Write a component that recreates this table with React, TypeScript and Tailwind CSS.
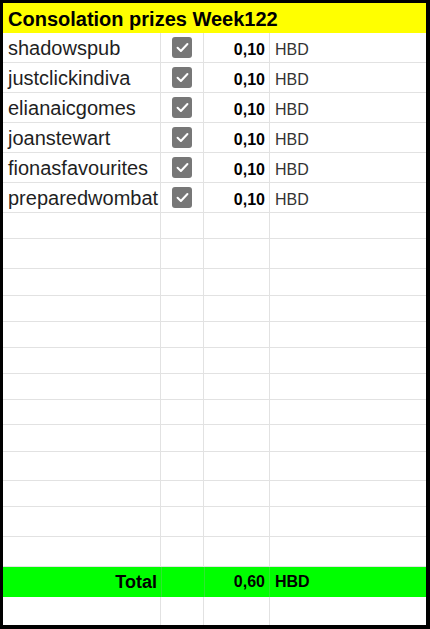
const winners = [
  "shadowspub",
  "justclickindiva",
  "elianaicgomes",
  "joanstewart",
  "fionasfavourites",
  "preparedwombat",
]

// empty sheet rows below the list, heights as seen in the sheet
const emptyRows = [26, 30, 27, 26, 26, 26, 26, 25, 27, 29, 26, 30, 30]

const cols = "grid grid-cols-[158px_43px_66px_1fr]"
const cell = "border-r border-b border-[#e2e2e2]"

function CheckBox() {
  return (
    <div className="w-[20px] h-[21px] rounded-[3px] bg-[#777777] flex items-center justify-center">
      <svg width="15" height="15" viewBox="0 0 14 14" fill="none">
        <path d="M2.4 7.3 L5.5 10.3 L11.6 3.7" stroke="white" strokeWidth="1.9" strokeLinecap="round" strokeLinejoin="round" />
      </svg>
    </div>
  )
}

export default function App() {
  return (
    <div
      className="w-[430px] h-[629px] bg-black pt-[3px] pl-[3px] pr-[4px] pb-[4px]"
      style={{ fontFamily: '"Liberation Sans", Arial, sans-serif' }}
    >
      <div className="h-full bg-white flex flex-col overflow-hidden">
        <div className="h-[30px] shrink-0 bg-[#ffff00] flex items-center pl-[5px] pt-[1px] text-[20px] font-bold text-black">
          Consolation prizes Week122
        </div>

        {winners.map((name) => (
          <div key={name} className={`${cols} h-[30px] shrink-0`}>
            <div className={`${cell} flex items-center pl-[5px] text-[20px] text-[#1f1f1f] whitespace-nowrap overflow-hidden`}>
              {name}
            </div>
            <div className={`${cell} flex items-center justify-center`}>
              <CheckBox />
            </div>
            <div className={`${cell} flex items-center justify-end pr-1 pt-[5px] text-[16px] font-bold text-black`}>
              0,10
            </div>
            <div className="border-b border-[#e2e2e2] flex items-center pl-[5px] pt-[5px] text-[16px] text-[#333333]">
              HBD
            </div>
          </div>
        ))}

        {emptyRows.map((h, i) => (
          <div key={i} className={`${cols} shrink-0`} style={{ height: h }}>
            <div className={cell} />
            <div className={cell} />
            <div className={cell} />
            <div className="border-b border-[#e2e2e2]" />
          </div>
        ))}

        <div className={`${cols} h-[30px] shrink-0 bg-[#00ff00]`}>
          <div className="flex items-center justify-end pr-1 text-[18px] font-bold text-black">Total</div>
          <div className="border-l border-[#2ee82e]" />
          <div className="border-l border-r border-[#2ee82e] flex items-center justify-end pr-1 text-[16px] font-bold text-black">
            0,60
          </div>
          <div className="flex items-center pl-[5px] text-[16px] font-bold text-black">HBD</div>
        </div>

        <div className={`${cols} flex-1`}>
          <div className="border-r border-[#e2e2e2]" />
          <div className="border-r border-[#e2e2e2]" />
          <div className="border-r border-[#e2e2e2]" />
          <div />
        </div>
      </div>
    </div>
  )
}
